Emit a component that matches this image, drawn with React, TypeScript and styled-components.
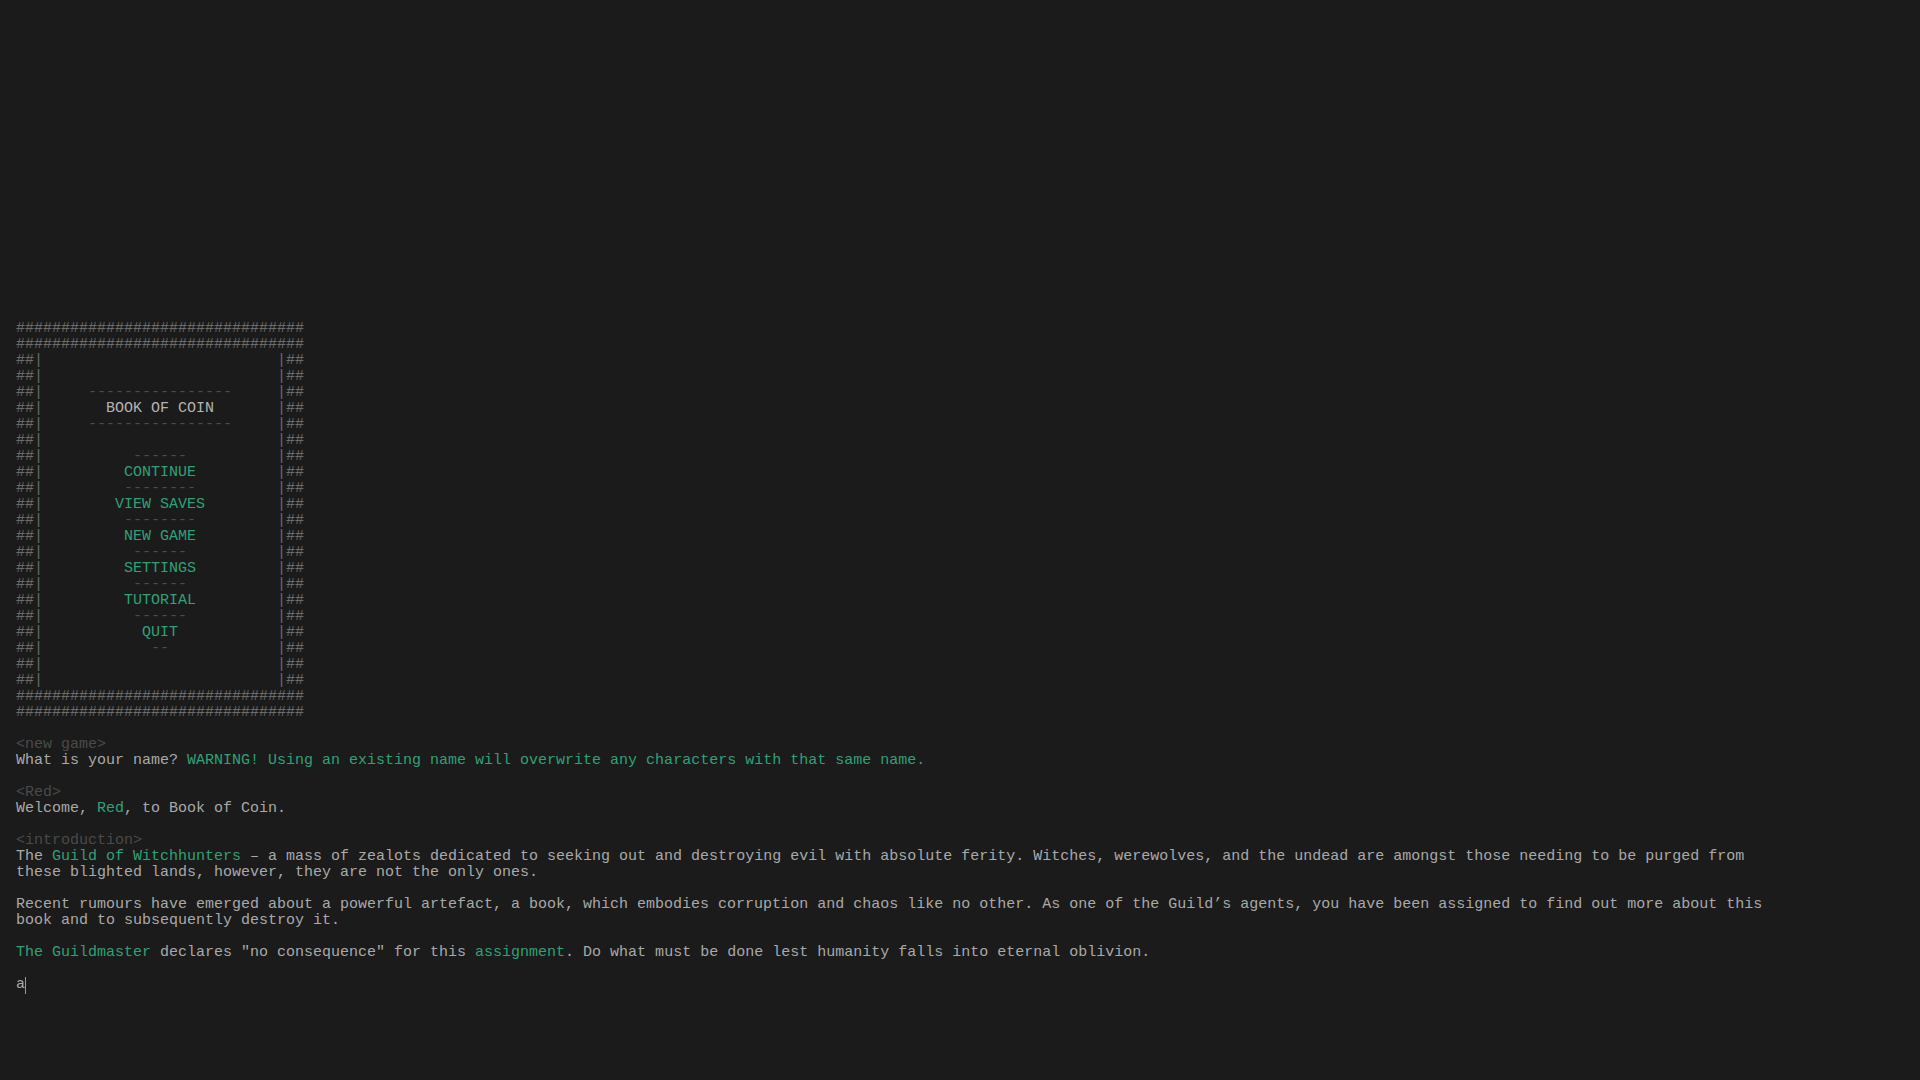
import React from "react";
import styled, { createGlobalStyle } from "styled-components";

const GlobalStyle = createGlobalStyle`
  html, body {
    margin: 0;
    padding: 0;
    background: #1b1b1b;
  }
  * { box-sizing: border-box; }
`;

const Terminal = styled.main`
  min-height: 100vh;
  display: flex;
  flex-direction: column;
  justify-content: flex-end;
  padding: 0 16px 87px 16px;
  background: #1b1b1b;
  color: #a9a9a9;
  font-family: "Liberation Mono", "DejaVu Sans Mono", monospace;
  font-size: 15px;
  line-height: 16px;
`;

const Output = styled.div`
  max-width: 1764px;
  display: flex;
  flex-direction: column;
`;

const MenuBox = styled.div`
  display: flex;
  flex-direction: column;
  white-space: pre;
`;

const HashRow = styled.div`
  height: 16px;
  color: #6c6c6c;
`;

const BoxRow = styled.div`
  display: flex;
  height: 16px;
`;

const Edge = styled.span`
  color: #6c6c6c;
  width: 27px;
`;

const Inner = styled.span`
  width: 234px;
  text-align: center;
`;

const Title = styled.span`
  color: #b3b3b3;
`;

const Rule = styled.span`
  color: #4c4c4c;
`;

const MenuItem = styled.span`
  color: #31a077;
  cursor: pointer;
`;

const Blank = styled.div`
  height: 16px;
`;

const Label = styled.div`
  color: #4a4a4a;
`;

const Line = styled.p`
  margin: 0;
  color: #a9a9a9;
`;

const Hl = styled.span`
  color: #31a077;
`;

const Prompt = styled.div`
  display: flex;
  align-items: center;
  height: 16px;
  color: #a9a9a9;
`;

const Caret = styled.span`
  display: inline-block;
  width: 1px;
  height: 17px;
  background: #9a9a9a;
`;

type Row =
  | { kind: "hash" }
  | { kind: "empty" }
  | { kind: "rule"; n: number }
  | { kind: "title"; text: string }
  | { kind: "item"; text: string };

const rows: Row[] = [
  { kind: "hash" },
  { kind: "hash" },
  { kind: "empty" },
  { kind: "empty" },
  { kind: "rule", n: 16 },
  { kind: "title", text: "BOOK OF COIN" },
  { kind: "rule", n: 16 },
  { kind: "empty" },
  { kind: "rule", n: 6 },
  { kind: "item", text: "CONTINUE" },
  { kind: "rule", n: 8 },
  { kind: "item", text: "VIEW SAVES" },
  { kind: "rule", n: 8 },
  { kind: "item", text: "NEW GAME" },
  { kind: "rule", n: 6 },
  { kind: "item", text: "SETTINGS" },
  { kind: "rule", n: 6 },
  { kind: "item", text: "TUTORIAL" },
  { kind: "rule", n: 6 },
  { kind: "item", text: "QUIT" },
  { kind: "rule", n: 2 },
  { kind: "empty" },
  { kind: "empty" },
  { kind: "hash" },
  { kind: "hash" },
];

const HASHES = "#".repeat(32);

function Menu() {
  return (
    <MenuBox>
      {rows.map((r, i) => {
        if (r.kind === "hash") return <HashRow key={i}>{HASHES}</HashRow>;
        let content: React.ReactNode = null;
        if (r.kind === "rule") content = <Rule>{"-".repeat(r.n)}</Rule>;
        if (r.kind === "title") content = <Title>{r.text}</Title>;
        if (r.kind === "item") content = <MenuItem>{r.text}</MenuItem>;
        return (
          <BoxRow key={i}>
            <Edge>##|</Edge>
            <Inner>{content}</Inner>
            <Edge>|##</Edge>
          </BoxRow>
        );
      })}
    </MenuBox>
  );
}

export default function App() {
  return (
    <>
      <GlobalStyle />
      <Terminal>
        <Output>
          <Menu />
          <Blank />
          <Label>&lt;new game&gt;</Label>
          <Line>
            What is your name?{" "}
            <Hl>WARNING! Using an existing name will overwrite any characters with that same name.</Hl>
          </Line>
          <Blank />
          <Label>&lt;Red&gt;</Label>
          <Line>
            Welcome, <Hl>Red</Hl>, to Book of Coin.
          </Line>
          <Blank />
          <Label>&lt;introduction&gt;</Label>
          <Line>
            The <Hl>Guild of Witchhunters</Hl> – a mass of zealots dedicated to seeking out and destroying evil
            with absolute ferity. Witches, werewolves, and the undead are amongst those needing to be purged from
            these blighted lands, however, they are not the only ones.
          </Line>
          <Blank />
          <Line>
            Recent rumours have emerged about a powerful artefact, a book, which embodies corruption and chaos like
            no other. As one of the Guild’s agents, you have been assigned to find out more about this book and to
            subsequently destroy it.
          </Line>
          <Blank />
          <Line>
            <Hl>The Guildmaster</Hl> declares "no consequence" for this <Hl>assignment</Hl>. Do what must be done
            lest humanity falls into eternal oblivion.
          </Line>
          <Blank />
          <Prompt>
            a<Caret />
          </Prompt>
        </Output>
      </Terminal>
    </>
  );
}
